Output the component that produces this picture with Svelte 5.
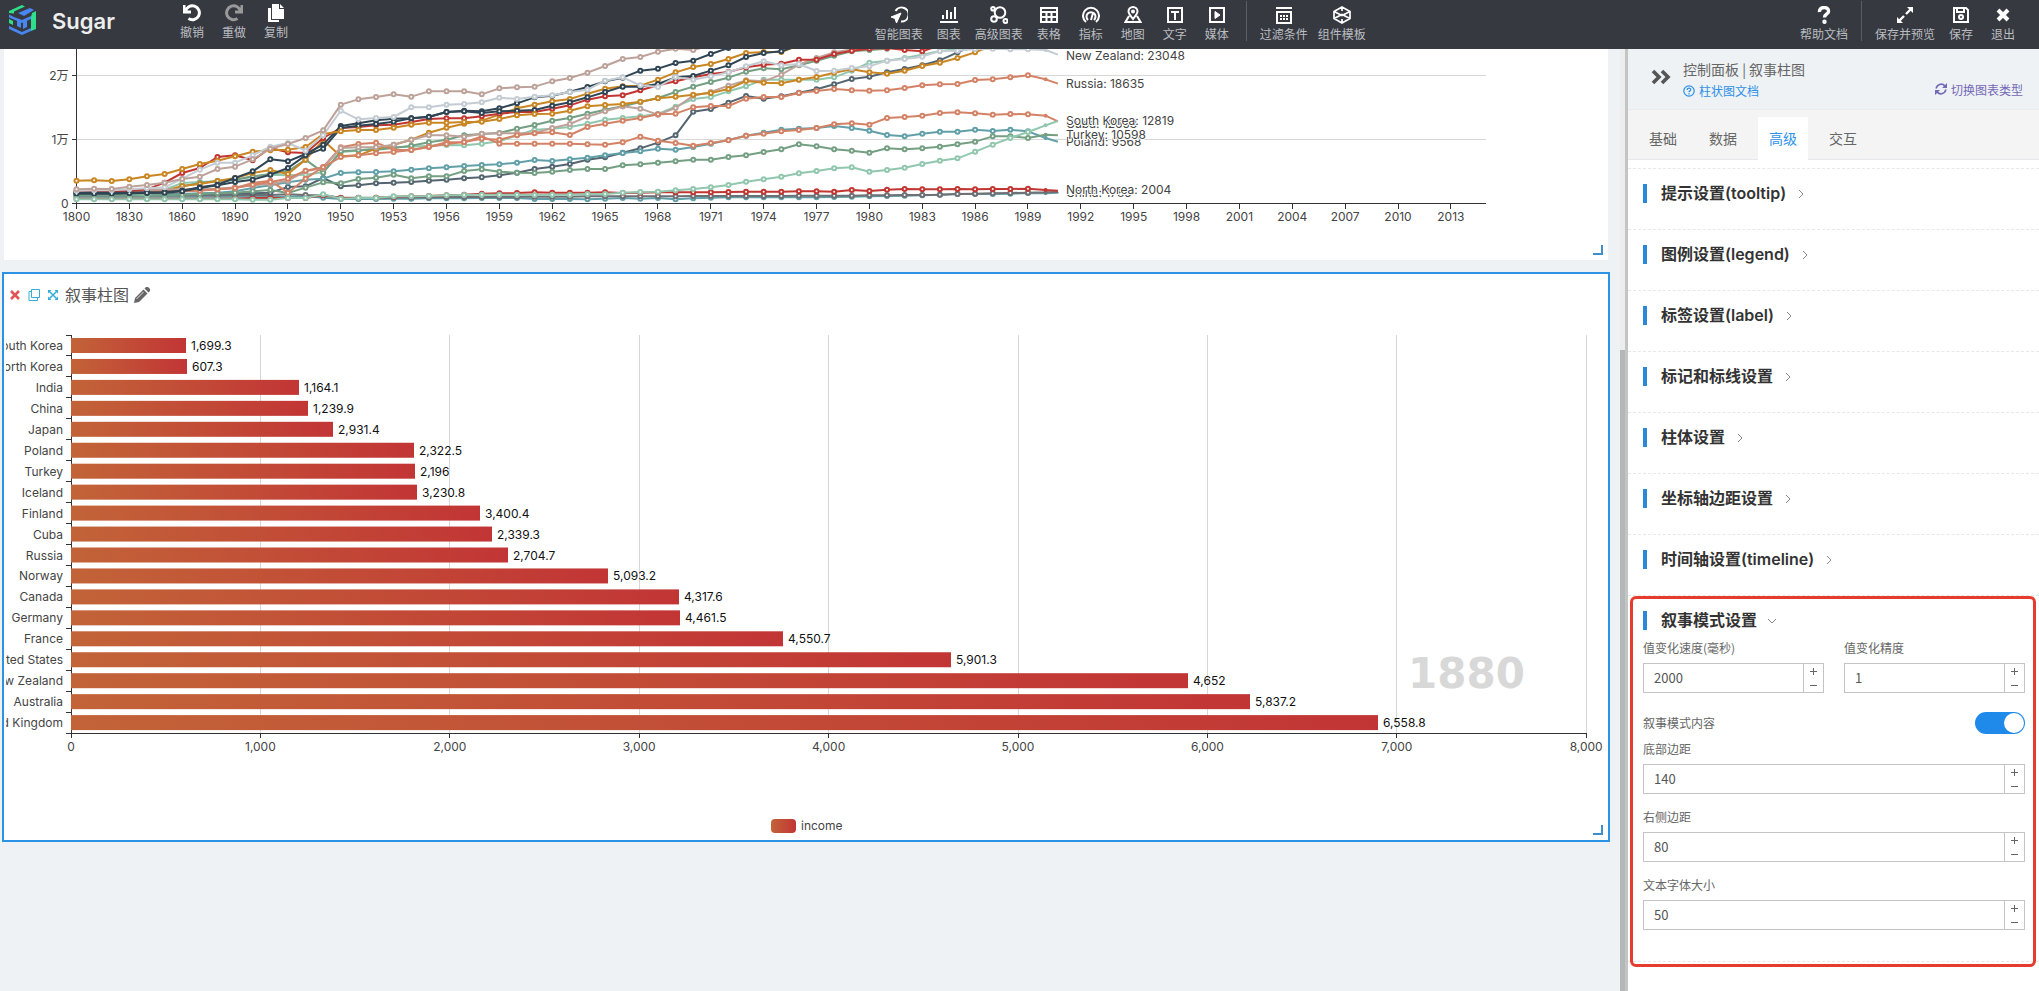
<script lang="ts">
  interface Tool {
    label: string;
    icon: string;
    muted?: boolean;
  }

  const historyTools: Tool[] = [
    { label: "撤销", icon: '<path d="M1 1v7h7M2.500 7.500A7 7 0 1 1 5.500 14.600" stroke-width="3"/>' },
    { label: "重做", icon: '<path d="M17 1v7h-7M15.500 7.500A7 7 0 1 0 12.500 14.600" stroke-width="3"/>', muted: true },
    { label: "复制", icon: '<path d="M5 0h7v5h5v10H5zM13 0l4 4h-4zM1 4h3v12h8v2H1z" fill="currentColor" stroke="none"/>' },
  ];
  const chartTools: Tool[] = [
    { label: "智能图表", icon: '<path d="M5.500 5A7 7 0 1 1 11 15.500"/><path d="M11 7 1 11l4 1.500L6.500 17z" fill="currentColor" stroke-width="1"/>' },
    { label: "图表", icon: '<path d="M0 16h18M3 13V9M7 13V4M11 13V6M15 13V1"/>' },
    { label: "高级图表", icon: '<circle cx="10" cy="6.500" r="5.300"/><circle cx="3" cy="2.800" r="1.800"/><circle cx="4" cy="13" r="2.800"/><circle cx="15.500" cy="15" r="2"/>' },
    { label: "表格", icon: '<path d="M1 2h16v14H1zM1 6h16M1 11h16M6.500 6v10M11.500 6v10"/>' },
    { label: "指标", icon: '<path d="M4 16A8 8 0 1 1 14 16M6 14a4.500 4.500 0 1 1 6 0M9 14l2-7"/>' },
    { label: "地图", icon: '<path d="M9 13C6 9 4.500 7.500 4.500 5.500a4.500 4.500 0 0 1 9 0C13.500 7.500 12 9 9 13zM5 10l-3.500 6h15L13 10"/><circle cx="9" cy="5.500" r="1"/>' },
    { label: "文字", icon: '<path d="M2 2h14v14H2zM5 6h8M9 6v8"/>' },
    { label: "媒体", icon: '<path d="M2 2h14v14H2z"/><path d="M7 5.500v7L12 9z" fill="currentColor" stroke-width="1"/>' },
  ];
  const pageTools: Tool[] = [
    { label: "过滤条件", icon: '<path d="M1 2h16M2 6h14v11H2z"/><path d="M5 10h8M5 13h8" stroke-dasharray="2 1"/>' },
    { label: "组件模板", icon: '<path d="M9 1l8 4.500v7L9 17l-8-4.500v-7zM1 5.500l8 4 8-4M1 12.500l8-4 8 4M9 1v4M9 13v4" stroke-width="1.700"/>' },
  ];
  const helpTools: Tool[] = [
    { label: "帮助文档", icon: '<path d="M4.500 6C4 0 14 0 13.500 5.500 13.500 8 9.500 8 9.500 11.500" stroke-width="3.400"/><circle cx="9.500" cy="15.700" r="1.200"/>' },
  ];
  const saveTools: Tool[] = [
    { label: "保存并预览", icon: '<path d="M15 3l-5 5M8 10l-5 5" stroke-width="2.400"/><path d="M11 1h6v6zM1 11v6h6z" fill="currentColor" stroke="none"/>' },
    { label: "保存", icon: '<path d="M2 2h12l2 2v12H2zM5 2v4h7V2"/><circle cx="9" cy="11" r="2"/>' },
    { label: "退出", icon: '<path d="M4 4l10 10M14 4L4 14" stroke-width="4"/>' },
  ];

  // narrative line chart
  const lineX0 = 72.5;
  const lineBase = 154.5;
  const lineStep = 17.62;
  const lineEnd = 1482;
  const lastIndex = 55.7; // animation is between two years here

  const years = Array.from({ length: 27 }, (_, i) =>
    i < 5 ? 1800 + i * 30 : 1950 + (i - 5) * 3
  );

  // three units for one pixel, from the top of the plot
  const series: { color: string; data: number[] }[] = [
    { color: "#61a0a8", data: [446, 446, 446, 446, 446, 446, 446, 446, 446, 446, 446, 446, 446, 444, 449, 453, 453, 453, 452, 452, 451, 451, 451, 450, 450, 450, 453, 453, 453, 454, 452, 450, 452, 450, 454, 451, 449, 448, 448, 448, 448, 448, 448, 447, 446, 445, 444, 443, 442, 440, 438, 438, 438, 437, 435, 436, 434, 433] },
    { color: "#6e7074", data: [442, 442, 442, 442, 442, 442, 442, 442, 442, 441, 441, 441, 439, 441, 442, 449, 449, 449, 448, 448, 448, 447, 447, 447, 446, 446, 446, 446, 446, 445, 445, 445, 445, 445, 445, 444, 444, 444, 444, 444, 444, 443, 443, 443, 443, 442, 442, 441, 441, 440, 438, 437, 436, 435, 434, 433, 432] },
    { color: "#c23531", data: [452, 452, 452, 452, 452, 452, 452, 452, 452, 452, 450, 450, 450, 450, 442, 450, 450, 449, 446, 445, 444, 442, 440, 437, 436, 435, 433, 434, 434, 434, 433, 435, 434, 433, 433, 433, 433, 432, 431, 431, 431, 430, 430, 431, 426, 429, 425, 423, 424, 424, 423, 424, 423, 423, 422, 426, 428] },
    { color: "#546570", data: [438, 438, 438, 438, 438, 438, 438, 438, 437, 436, 436, 434, 417, 415, 390, 415, 412, 406, 404, 402, 398, 395, 391, 388, 382, 374, 363, 356, 348, 335, 328, 314, 301, 284, 262, 191, 183, 164, 144, 152, 145, 134, 124, 109, 93, 86, 73, 63, 52, 37, 13, -8] },
    { color: "#61a0a8", data: [440, 440, 440, 440, 440, 440, 438, 436, 434, 430, 420, 412, 403, 395, 392, 375, 373, 372, 370, 365, 361, 358, 354, 351, 349, 344, 336, 339, 334, 329, 322, 315, 310, 302, 305, 297, 287, 276, 263, 254, 245, 242, 240, 234, 240, 248, 261, 265, 257, 251, 251, 245, 249, 245, 250, 270, 281] },
    { color: "#749f83", data: [442, 442, 442, 442, 442, 442, 440, 438, 436, 434, 430, 426, 435, 419, 403, 406, 393, 389, 380, 391, 385, 385, 369, 364, 371, 374, 375, 371, 366, 363, 363, 352, 349, 344, 340, 335, 335, 327, 322, 312, 304, 289, 295, 304, 308, 314, 301, 304, 301, 296, 289, 281, 265, 265, 270, 260, 262] },
    { color: "#91c7ae", data: [438, 438, 438, 438, 440, 425, 405, 402, 400, 396, 386, 380, 382, 380, 373, 312, 308, 300, 298, 296, 293, 291, 292, 287, 280, 262, 245, 242, 237, 227, 215, 210, 205, 198, 176, 153, 147, 130, 115, 95, 95, 95, 95, 88, 68, 44, 38, 30, 20, 9, 3, -8] },
    { color: "#749f83", data: [438, 438, 438, 437, 436, 434, 415, 405, 399, 395, 385, 378, 370, 335, 374, 310, 307, 305, 300, 293, 283, 275, 262, 258, 255, 242, 231, 218, 210, 197, 185, 175, 162, 150, 132, 116, 102, 89, 71, 61, 64, 52, 38, 23, 10, 6, 2, -8] },
    { color: "#ca8622", data: [434, 434, 434, 433, 432, 428, 414, 408, 399, 390, 375, 366, 378, 335, 277, 325, 322, 302, 290, 275, 254, 239, 227, 218, 200, 181, 170, 160, 153, 137, 122, 115, 113, 95, 73, 57, 48, 33, 15, 12, 12, -8] },
    { color: "#d48265", data: [432, 432, 432, 431, 430, 428, 428, 427, 424, 420, 405, 398, 434, 392, 357, 298, 288, 284, 305, 306, 297, 283, 283, 265, 287, 287, 287, 287, 287, 289, 290, 283, 266, 278, 285, 293, 285, 277, 263, 257, 250, 246, 240, 229, 226, 230, 210, 207, 203, 195, 193, 196, 200, 198, 199, 203, 220] },
    { color: "#bda29a", data: [428, 428, 428, 427, 426, 424, 424, 424, 422, 418, 412, 408, 398, 370, 360, 300, 298, 298, 290, 275, 262, 262, 266, 257, 256, 256, 255, 240, 228, 206, 190, 175, 182, 200, 180, 143, 132, 113, 97, 100, 80, 50, 30, 13, 4, -8] },
    { color: "#d48265", data: [435, 435, 435, 434, 433, 431, 430, 428, 424, 420, 410, 402, 392, 368, 358, 327, 322, 316, 312, 306, 296, 288, 282, 272, 275, 262, 256, 253, 261, 237, 227, 218, 210, 199, 197, 178, 174, 174, 152, 147, 147, 135, 129, 123, 127, 128, 127, 120, 112, 109, 108, 96, 94, 88, 82, 94, 107] },
    { color: "#c23531", data: [430, 430, 430, 429, 424, 404, 375, 360, 327, 322, 337, 300, 313, 315, 270, 240, 237, 232, 230, 222, 213, 211, 211, 205, 197, 192, 192, 182, 172, 155, 145, 142, 127, 112, 100, 88, 78, 72, 58, 50, 47, 35, 35, 18, 8, 2, 0, 6, 10, -8] },
    { color: "#2f4554", data: [434, 434, 434, 434, 433, 432, 428, 418, 410, 390, 370, 334, 340, 318, 290, 234, 226, 217, 212, 211, 206, 192, 188, 190, 181, 166, 148, 143, 131, 117, 100, 89, 68, 62, 45, 38, 18, 0, -8] },
    { color: "#2f4554", data: [437, 437, 437, 436, 435, 434, 430, 420, 412, 402, 395, 380, 360, 322, 302, 240, 233, 228, 221, 211, 207, 192, 190, 195, 190, 188, 186, 173, 163, 148, 132, 116, 116, 108, 88, 84, 68, 52, 27, 15, 10, -8] },
    { color: "#ca8622", data: [398, 397, 399, 394, 385, 378, 363, 348, 338, 325, 311, 307, 305, 297, 258, 250, 246, 246, 239, 230, 224, 224, 222, 221, 213, 202, 198, 197, 188, 175, 171, 168, 161, 151, 146, 140, 135, 123, 99, 104, 106, 95, 87, 74, 64, 73, 77, 68, 54, 44, 30, 13, -8] },
    { color: "#c4ccd3", data: [428, 427, 427, 424, 421, 418, 392, 365, 344, 344, 322, 296, 285, 308, 262, 188, 214, 210, 207, 178, 178, 170, 168, 163, 149, 153, 146, 142, 132, 125, 98, 88, 112, 117, 87, 95, 85, 73, 55, 40, 52, 48, 69, 68, 60, 55, 38, 33, 26, 9, 8, 3, 2, 4, 4, 6, 20] },
    { color: "#bda29a", data: [424, 422, 423, 416, 411, 404, 393, 386, 363, 356, 334, 302, 288, 270, 247, 170, 154, 147, 139, 146, 130, 130, 130, 139, 121, 118, 116, 100, 90, 74, 54, 33, 27, 11, 2, 6, -8] },
    { color: "#91c7ae", data: [454, 454, 454, 454, 454, 454, 454, 454, 454, 454, 455, 455, 450, 450, 439, 452, 450, 450, 445, 445, 444, 442, 441, 440, 440, 440, 441, 440, 440, 438, 438, 434, 432, 431, 427, 423, 418, 411, 401, 394, 386, 376, 369, 361, 358, 371, 366, 359, 348, 338, 331, 311, 290, 270, 252, 232, 219] },
  ];

  const endLabels = [
    { text: "New Zealand: 23048", y: 7 },
    { text: "Russia: 18635", y: 35 },
    { text: "Cuba: 12653", y: 75 },
    { text: "South Korea: 12819", y: 72 },
    { text: "Poland: 9568", y: 93 },
    { text: "Turkey: 10598", y: 86 },
    { text: "China: 1785", y: 144 },
    { text: "North Korea: 2004", y: 141 },
  ];

  function px(i: number): number {
    return lineX0 + Math.min(i, lastIndex) * lineStep;
  }
  function py(v: number): number {
    return (v - 3) / 3;
  }
  function toPoints(data: number[]): string {
    return data.map((v, i) => `${px(i)},${py(v)}`).join(" ");
  }

  // narrative bar chart
  const barX0 = 65;
  const barTop = 19;
  const band = 20.95;
  const barBase = barTop + band * 19;
  const tickGap = 189.4;

  const bars = [
    { name: "South Korea", value: "1,699.3", width: 115 },
    { name: "North Korea", value: "607.3", width: 116 },
    { name: "India", value: "1,164.1", width: 228 },
    { name: "China", value: "1,239.9", width: 237 },
    { name: "Japan", value: "2,931.4", width: 262 },
    { name: "Poland", value: "2,322.5", width: 343 },
    { name: "Turkey", value: "2,196", width: 344 },
    { name: "Iceland", value: "3,230.8", width: 346 },
    { name: "Finland", value: "3,400.4", width: 409 },
    { name: "Cuba", value: "2,339.3", width: 421 },
    { name: "Russia", value: "2,704.7", width: 437 },
    { name: "Norway", value: "5,093.2", width: 537 },
    { name: "Canada", value: "4,317.6", width: 608 },
    { name: "Germany", value: "4,461.5", width: 609 },
    { name: "France", value: "4,550.7", width: 712 },
    { name: "United States", value: "5,901.3", width: 880 },
    { name: "New Zealand", value: "4,652", width: 1117 },
    { name: "Australia", value: "5,837.2", width: 1179 },
    { name: "United Kingdom", value: "6,558.8", width: 1307 },
  ];

  // control panel
  const tabs = ["基础", "数据", "高级", "交互"];
  let activeTab = "高级";
  const sections = [
    "提示设置(tooltip)",
    "图例设置(legend)",
    "标签设置(label)",
    "标记和标线设置",
    "柱体设置",
    "坐标轴边距设置",
    "时间轴设置(timeline)",
  ];
  let showContent = true;
  let topFields = [
    { id: "speed", label: "值变化速度(毫秒)", value: 2000 },
    { id: "precision", label: "值变化精度", value: 1 },
  ];
  let fields = [
    { id: "bottom", label: "底部边距", value: 140 },
    { id: "right", label: "右侧边距", value: 80 },
    { id: "fontsize", label: "文本字体大小", value: 50 },
  ];
</script>

<div class="app">
  <header class="topbar">
    <svg class="logo" viewBox="0 0 28 30" width="28" height="30">
      <path d="M1 6 14 0l3 1.500L6 6.500v2L1 8z" fill="#2fe08a" />
      <path d="M10 8 22 3l4 2-10 6zM1 9.500 6 12l8 3 9-4v3l-9 4L1 12.500z" fill="#4a86f0" />
      <path d="M24 8l4-2v18l-5 2V12z" fill="#2fe08a" />
      <path d="M1 14l4 2v4l-4-2z" fill="#2fe08a" />
      <path d="M9 14l4 1v8l-4-2zM15 15l4-1v8l-4 2zM1 21l13 6 9-4v3l-9 4L1 24z" fill="#4a86f0" />
    </svg>
    <strong class="brand">Sugar</strong>
    <div class="tools history">
      {#each historyTools as tool}
        <button class="tool" class:muted={tool.muted}>
          <svg viewBox="0 0 18 18" width="18" height="18">{@html tool.icon}</svg>
          <span>{tool.label}</span>
        </button>
      {/each}
    </div>
    <div class="spacerLeft"></div>
    <div class="tools">
      {#each chartTools as tool}
        <button class="tool">
          <svg viewBox="0 0 18 18" width="18" height="18">{@html tool.icon}</svg>
          <span>{tool.label}</span>
        </button>
      {/each}
      <i class="divider"></i>
      {#each pageTools as tool}
        <button class="tool">
          <svg viewBox="0 0 18 18" width="18" height="18">{@html tool.icon}</svg>
          <span>{tool.label}</span>
        </button>
      {/each}
    </div>
    <div class="spacerRight"></div>
    <div class="tools">
      {#each helpTools as tool}
        <button class="tool">
          <svg viewBox="0 0 18 18" width="18" height="18">{@html tool.icon}</svg>
          <span>{tool.label}</span>
        </button>
      {/each}
      <i class="divider"></i>
      {#each saveTools as tool}
        <button class="tool">
          <svg viewBox="0 0 18 18" width="18" height="18">{@html tool.icon}</svg>
          <span>{tool.label}</span>
        </button>
      {/each}
    </div>
  </header>

  <div class="workspace">
    <main class="board">
      <section class="card">
        <svg class="chart" viewBox="0 0 1604 211">
          {#each [26.5, 90.5] as y}
            <path class="gridLine" d="M{lineX0} {y}H{lineEnd}" />
          {/each}
          <path class="axis" d="M{lineX0} 0V{lineBase}H{lineEnd}" />
          {#each [["2万", 26.5], ["1万", 90.5], ["0", 154.5]] as [text, y]}
            <path class="axis" d="M{lineX0 - 5} {y}h5" />
            <text class="axisText end" x={lineX0 - 8} y={Number(y) + 4}>{text}</text>
          {/each}
          {#each years as year, i}
            <path class="axis" d="M{lineX0 + i * 3 * lineStep} {lineBase}v5" />
            <text class="axisText middle" x={lineX0 + i * 3 * lineStep} y={lineBase + 17}>{year}</text>
          {/each}
          {#each series as line}
            <polyline points={toPoints(line.data)} fill="none" stroke={line.color} stroke-width="2" stroke-linejoin="bevel" />
            {#each line.data as v, i}
              {#if i < 55}
                <circle cx={px(i)} cy={py(v)} r="2" fill="#fff" stroke={line.color} stroke-width="2" />
              {:else if i === 55}
                <circle class="dot" cx={px(i)} cy={py(v)} r="2" fill={line.color} />
              {/if}
            {/each}
          {/each}
          {#each endLabels as label}
            <text class="endLabel" x="1062" y={label.y + 4}>{label.text}</text>
          {/each}
        </svg>
        <i class="resize"></i>
      </section>

      <section class="card selected">
        <div class="cardHead">
          <button class="mini close" aria-label="删除">
            <svg viewBox="0 0 12 12" width="12" height="12"><path d="M2 2l8 8M10 2l-8 8" stroke-width="2.600" /></svg>
          </button>
          <button class="mini" aria-label="复制图表">
            <svg viewBox="0 0 12 12" width="12" height="12"><path d="M3.500.5h8v8h-8zM3.500 2.500h-2.500v9h8.500v-3" /></svg>
          </button>
          <button class="mini" aria-label="放大">
            <svg viewBox="0 0 12 12" width="12" height="12"><path d="M2 2l8 8M10 2l-8 8" stroke-width="1.500" /><path d="M1 1h3.500L1 4.500zM11 1v3.500L7.500 1zM1 11V7.500L4.500 11zM11 11H7.500L11 7.500z" fill="currentColor" stroke="none" /></svg>
          </button>
          <h2>叙事柱图</h2>
          <button class="mini edit" aria-label="编辑标题">
            <svg viewBox="0 0 16 16" width="16" height="16"><path d="M0 16l1-5 8.500-8.500 4 4L5 15zM10.500 1.500 12 0h2l2 2v2l-1.500 1.500z" fill="currentColor" stroke="none" /><path d="M2.500 12l7-7" stroke="#fff" stroke-width="0.800" /></svg>
          </button>
        </div>
        <svg class="chart barChart" viewBox="0 0 1602 524">
          <defs>
            <linearGradient id="incomeFill" x1="0" y1="0" x2="1" y2="0">
              <stop offset="0" stop-color="#c26338" />
              <stop offset="1" stop-color="#c23535" />
            </linearGradient>
          </defs>
          {#each Array(8) as _, i}
            <path class="gridLine" d="M{barX0 + (i + 1) * tickGap} {barTop}V{barBase}" />
          {/each}
          <text class="yearMark" x="1402" y="372">1880</text>
          <path class="axis" d="M{barX0} {barTop}V{barBase}H{barX0 + 8 * tickGap}" />
          {#each Array(20) as _, i}
            <path class="axis" d="M{barX0 - 5} {barTop + i * band}h5" />
          {/each}
          {#each Array(9) as _, i}
            <path class="axis" d="M{barX0 + i * tickGap} {barBase}v5" />
            <text class="axisText middle" x={barX0 + i * tickGap} y={barBase + 18}>{(i * 1000).toLocaleString("en-US")}</text>
          {/each}
          {#each bars as bar, i}
            <rect class="bar" x={barX0} y={barTop + i * band + 3} width={bar.width} height="15" fill="url(#incomeFill)" />
            <text class="axisText end" x={barX0 - 8} y={barTop + i * band + 15}>{bar.name}</text>
            <text class="barValue" x={barX0 + bar.width + 5} y={barTop + i * band + 15}>{bar.value}</text>
          {/each}
          <rect class="bar" x="765" y="503" width="25" height="14" rx="4" fill="url(#incomeFill)" />
          <text class="axisText" x="795" y="514">income</text>
        </svg>
        <i class="resize"></i>
      </section>
    </main>
    <div class="scrollTrack"><i></i></div>

    <aside class="panel">
      <div class="panelHead">
        <button class="collapse" aria-label="收起">
          <svg viewBox="0 0 20 16" width="20" height="16"><path d="M2 2l6 6-6 6M11 2l6 6-6 6" stroke-width="3.600" /></svg>
        </button>
        <div class="panelTitle">
          <h1>控制面板 | 叙事柱图</h1>
          <a href="#doc">
            <svg viewBox="0 0 12 12" width="12" height="12"><circle cx="6" cy="6" r="5.200" stroke-width="1.200" /><path d="M4.200 5C4.200 2.500 8 2.700 7.700 4.900 7.500 6 6 5.800 6 7.300M6 8.300v1.200" stroke-width="1.300" /></svg>
            柱状图文档
          </a>
        </div>
        <button class="switch">
          <svg viewBox="0 0 12 12" width="12" height="12"><path d="M1.200 5.500A5 5 0 0 1 9.800 2.800M10.800 6.500A5 5 0 0 1 2.200 9.200" stroke-width="1.700" /><path d="M12 0v5H7zM0 12V7h5z" fill="currentColor" stroke="none" /></svg>
          切换图表类型
        </button>
      </div>
      <nav class="tabs">
        {#each tabs as tab}
          <button class:active={tab === activeTab} on:click={() => (activeTab = tab)}>{tab}</button>
        {/each}
      </nav>
      <div class="sections">
        {#each sections as title}
          <section class="setting">
            <button class="settingTitle">
              {title}
              <svg viewBox="0 0 10 10" width="10" height="10"><path d="M3 1l4 4-4 4" stroke-width="1" /></svg>
            </button>
          </section>
        {/each}
        <section class="setting open">
          <button class="settingTitle">
            叙事模式设置
            <svg viewBox="0 0 10 10" width="10" height="10"><path d="M1 3l4 4 4-4" stroke-width="1" /></svg>
          </button>
          <div class="pair">
            {#each topFields as field}
              <div class="field">
                <label for={field.id}>{field.label}</label>
                <div class="number">
                  <input id={field.id} type="text" bind:value={field.value} />
                  <div class="stepper">
                    <button aria-label="增加" on:click={() => (field.value = +field.value + 1)}><svg viewBox="0 0 7 7" width="7" height="7"><path d="M0 3.500h7M3.500 0v7" stroke-width="1" /></svg></button>
                    <button aria-label="减少" on:click={() => (field.value = +field.value - 1)}><svg viewBox="0 0 7 7" width="7" height="7"><path d="M0 3.500h7" stroke-width="1" /></svg></button>
                  </div>
                </div>
              </div>
            {/each}
          </div>
          <div class="toggleRow">
            <label for="content">叙事模式内容</label>
            <input id="content" class="toggle" type="checkbox" bind:checked={showContent} />
          </div>
          {#each fields as field}
            <div class="field">
              <label for={field.id}>{field.label}</label>
              <div class="number">
                <input id={field.id} type="text" bind:value={field.value} />
                <div class="stepper">
                  <button aria-label="增加" on:click={() => (field.value = +field.value + 1)}><svg viewBox="0 0 7 7" width="7" height="7"><path d="M0 3.500h7M3.500 0v7" stroke-width="1" /></svg></button>
                  <button aria-label="减少" on:click={() => (field.value = +field.value - 1)}><svg viewBox="0 0 7 7" width="7" height="7"><path d="M0 3.500h7" stroke-width="1" /></svg></button>
                </div>
              </div>
            </div>
          {/each}
        </section>
      </div>
    </aside>
  </div>
</div>

<style>
  :global(body) {
    background: #eef2f4;
  }
  .app {
    display: flex;
    flex-direction: column;
    min-height: 100vh;
    font-family: "Noto Sans CJK SC", sans-serif;
    font-size: 12px;
    color: #666;
  }
  button {
    border: 0;
    padding: 0;
    background: none;
    font: inherit;
    color: inherit;
    cursor: pointer;
  }
  svg {
    display: block;
    flex: none;
    fill: none;
    stroke: currentColor;
  }
  h1,
  h2 {
    margin: 0;
    font-weight: 400;
  }

  /* top bar */
  .topbar {
    display: flex;
    height: 49px;
    padding: 0 15px 0 8px;
    box-sizing: border-box;
    background: #363940;
    color: #fff;
  }
  .logo {
    margin-top: 5px;
    stroke: none;
  }
  .brand {
    width: 119px;
    margin-left: 16px;
    font: 600 22px/42px Inter, sans-serif;
    color: #eee;
  }
  .tools {
    display: flex;
    padding-top: 6px;
  }
  .tools.history {
    padding-top: 4px;
  }
  .tool {
    display: flex;
    flex-direction: column;
    align-items: center;
    gap: 1px;
    min-width: 42px;
    padding: 0 5px;
  }
  .tool svg {
    stroke-width: 2;
  }
  .tool span {
    line-height: 18px;
    color: #bbbdc0;
    white-space: nowrap;
  }
  .tool.muted svg {
    color: #999;
  }
  .divider {
    width: 1px;
    height: 40px;
    margin: -5px 8px 0;
    background: #5a5d63;
  }
  .spacerLeft {
    flex: 27;
  }
  .spacerRight {
    flex: 20;
  }

  /* canvas */
  .workspace {
    display: flex;
    flex: 1;
  }
  .board {
    flex: 1;
    min-width: 0;
    padding: 0 10px 0 2px;
    background: #eef2f4;
  }
  .card {
    position: relative;
    margin-bottom: 10px;
    border: 2px solid transparent;
    border-top: 0;
    background: #fff;
    background-clip: padding-box;
  }
  .card.selected {
    border: 2px solid #2b92e4;
  }
  .cardHead {
    display: flex;
    align-items: center;
    gap: 7px;
    height: 42px;
    padding-left: 5px;
  }
  .cardHead h2 {
    margin-left: -1px;
    font-size: 16px;
    line-height: 22px;
    padding-bottom: 2px;
    color: #555;
  }
  .mini {
    color: #35add8;
  }
  .mini.close {
    color: #e05555;
  }
  .mini.edit {
    margin-left: -2px;
    color: #666;
  }
  .resize {
    position: absolute;
    right: 5px;
    bottom: 5px;
    width: 8px;
    height: 8px;
    border: solid #3c8fcb;
    border-width: 0 2px 2px 0;
  }
  .chart {
    width: 100%;
    height: auto;
    overflow: hidden;
  }
  .barChart {
    width: auto;
    margin-left: 2px;
  }
  .gridLine {
    stroke: #d8d8d8;
    stroke-width: 1;
    shape-rendering: crispEdges;
  }
  .axis {
    stroke: #333;
    stroke-width: 1;
    shape-rendering: crispEdges;
  }
  .bar,
  .dot {
    stroke: none;
  }
  text {
    font-family: Inter, "Noto Sans CJK SC", sans-serif;
    font-size: 12px;
    stroke: none;
  }
  .axisText {
    fill: #444;
  }
  .end {
    text-anchor: end;
  }
  .middle {
    text-anchor: middle;
  }
  .barValue {
    fill: #111;
  }
  .endLabel {
    fill: #444;
    stroke: #fff;
    stroke-width: 2px;
    paint-order: stroke;
  }
  .yearMark {
    font: 700 42px "DejaVu Sans", sans-serif;
    fill: #d8d8d8;
  }
  .scrollTrack {
    display: flex;
    align-items: flex-end;
    width: 5px;
    background: #ebedef;
  }
  .scrollTrack i {
    width: 5px;
    height: 68%;
    background: #b4b7b7;
  }

  /* control panel */
  .panel {
    flex: none;
    width: 411px;
    border-left: 3px solid #c3c4c4;
    background: #fff;
  }
  .panelHead {
    display: flex;
    height: 61px;
    padding: 0 16px 0 23px;
    box-sizing: border-box;
    border-bottom: 1px solid #e8ebee;
    background: #eef2f4;
  }
  .collapse {
    width: 32px;
    height: 16px;
    margin-top: 20px;
    color: #555;
  }
  .panelTitle {
    flex: 1;
    padding-top: 9px;
  }
  .panelTitle h1 {
    font-size: 14px;
    line-height: 22px;
  }
  .panelTitle a {
    display: flex;
    align-items: center;
    gap: 4px;
    line-height: 22px;
    color: #2d90e8;
    text-decoration: none;
  }
  .switch {
    display: flex;
    align-items: center;
    gap: 4px;
    height: 20px;
    margin-top: 30px;
    color: #7468b8;
  }
  .tabs {
    display: flex;
    align-items: flex-end;
    gap: 10px;
    height: 50px;
    padding-left: 10px;
    box-sizing: border-box;
    border-bottom: 1px solid #e8e8ec;
    background: #f4f4f4;
  }
  .tabs button {
    height: 43px;
    margin-bottom: -1px;
    padding: 0 11px 2px;
    font-size: 14px;
  }
  .tabs .active {
    background: #fff;
    color: #2d90e8;
  }
  .sections {
    padding-top: 8px;
  }
  .setting {
    position: relative;
    padding: 15px 14px 26px 15px;
    border-top: 1px dashed #e8e8e8;
  }
  .settingTitle {
    display: flex;
    align-items: center;
    gap: 10px;
    height: 19px;
    padding-left: 14px;
    border-left: 4px solid #2d87d8;
    font-family: Inter, "Noto Sans CJK SC", sans-serif;
    font-size: 16px;
    font-weight: 600;
    line-height: 19px;
    color: #333;
  }
  .settingTitle svg {
    color: #888;
  }
  .setting.open {
    padding-bottom: 31px;
    border-bottom: 1px dashed #e8e8e8;
  }
  .setting.open::after {
    content: "";
    position: absolute;
    inset: 0 3px -6px 2px;
    border: 3px solid #e63c30;
    border-radius: 6px;
    pointer-events: none;
  }
  .pair {
    display: grid;
    grid-template-columns: repeat(2, minmax(0, 1fr));
    gap: 20px;
    margin: 10px 0 19px;
  }
  .field + .field {
    margin-top: 15px;
  }
  .pair .field {
    margin-top: 0;
  }
  .field label {
    display: block;
    margin-bottom: 7px;
    line-height: 16px;
  }
  .number {
    display: flex;
    height: 30px;
    box-sizing: border-box;
    border: 1px solid #c4c4c4;
  }
  .number input {
    flex: 1;
    min-width: 0;
    padding: 0 10px 2px;
    border: 0;
    outline: 0;
    background: none;
    font: 13px "Noto Sans CJK SC", sans-serif;
    color: #555;
  }
  .stepper {
    display: flex;
    flex-direction: column;
    width: 19px;
    border-left: 1px solid #c4c4c4;
  }
  .stepper button {
    display: flex;
    flex: 1;
    align-items: center;
    justify-content: center;
  }
  .toggleRow {
    display: flex;
    align-items: center;
    justify-content: space-between;
    margin-bottom: 7px;
  }
  .toggleRow label {
    padding-bottom: 2px;
  }
  .toggle {
    appearance: none;
    width: 50px;
    height: 22px;
    margin: 0;
    border-radius: 11px;
    background: #ccc;
  }
  .toggle::before {
    content: "";
    display: block;
    width: 20px;
    height: 20px;
    margin: 1px;
    border-radius: 50%;
    background: #fff;
  }
  .toggle:checked {
    background: #1f8aea;
  }
  .toggle:checked::before {
    margin-left: 29px;
  }
</style>
